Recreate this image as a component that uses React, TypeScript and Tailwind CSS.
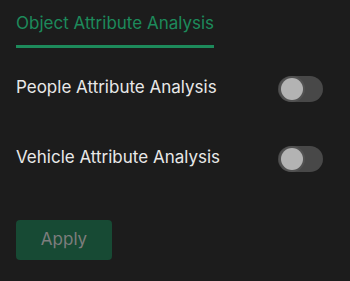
import { useState } from 'react';

interface ToggleProps {
  checked: boolean;
  onChange: (v: boolean) => void;
}

function Toggle({ checked, onChange }: ToggleProps) {
  return (
    <button
      type="button"
      onClick={() => onChange(!checked)}
      className={`relative h-[26px] w-[45px] shrink-0 rounded-full ${checked ? 'bg-[#1d8a5b]' : 'bg-[#484848]'}`}
    >
      <span
        className={`absolute top-[2px] h-[22px] w-[22px] rounded-full bg-[#b3b3b3] shadow-[0_0_0_2px_rgba(90,90,90,0.6)] ${checked ? 'left-[20px]' : 'left-[3px]'}`}
      />
    </button>
  );
}

export default function App() {
  const [people, setPeople] = useState(false);
  const [vehicle, setVehicle] = useState(false);

  return (
    <div className="h-[281px] w-[350px] bg-[#1c1c1c] pl-4 pr-[27px] pt-[11px] font-['Inter',sans-serif]">
      {/* Tab header */}
      <div className="inline-block border-b-[3px] border-[#1d8a5b] pb-[10px] text-[17px] leading-6 text-[#1d8a5b]">
        Object Attribute Analysis
      </div>

      {/* Toggle rows */}
      <div className="mt-[28px] flex flex-col gap-[44px]">
        <div className="flex h-[26px] items-center justify-between">
          <span className="-mt-[2px] text-[17px] text-[#e8e8e8]">People Attribute Analysis</span>
          <Toggle checked={people} onChange={setPeople} />
        </div>
        <div className="flex h-[26px] items-center justify-between">
          <span className="-mt-[2px] text-[17px] text-[#e8e8e8]">Vehicle Attribute Analysis</span>
          <Toggle checked={vehicle} onChange={setVehicle} />
        </div>
      </div>

      <button
        type="button"
        disabled
        className="mt-[48px] h-10 w-24 rounded bg-[#174a34] text-[17px] text-[#7d7d7d]"
      >
        Apply
      </button>
    </div>
  );
}
